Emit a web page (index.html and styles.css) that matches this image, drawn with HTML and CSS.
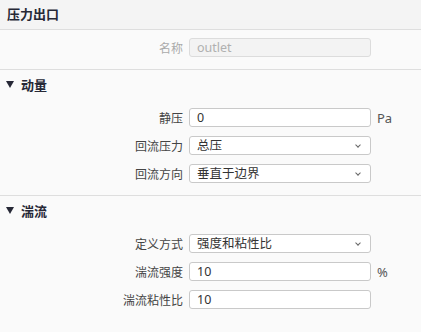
FILE: index.html
```html
<!DOCTYPE html>
<html lang="zh">
<head>
<meta charset="utf-8">
<link rel="stylesheet" href="styles.css">
</head>
<body>
<div class="panel">
  <div class="header">压力出口</div>
  <div class="block name-block">
    <div class="grid">
      <label class="lbl muted">名称</label>
      <div class="field disabled">outlet</div>
      <span></span>
    </div>
  </div>
  <div class="block">
    <div class="sec-title"><span class="tri"></span>动量</div>
    <div class="grid rows">
      <label class="lbl">静压</label>
      <div class="field">0</div>
      <span class="unit">Pa</span>

      <label class="lbl">回流压力</label>
      <div class="field select">总压<span class="chev"></span></div>
      <span></span>

      <label class="lbl">回流方向</label>
      <div class="field select">垂直于边界<span class="chev"></span></div>
      <span></span>
    </div>
  </div>
  <div class="block last">
    <div class="sec-title"><span class="tri"></span>湍流</div>
    <div class="grid rows">
      <label class="lbl">定义方式</label>
      <div class="field select">强度和粘性比<span class="chev"></span></div>
      <span></span>

      <label class="lbl">湍流强度</label>
      <div class="field">10</div>
      <span class="unit">%</span>

      <label class="lbl">湍流粘性比</label>
      <div class="field">10</div>
      <span></span>
    </div>
  </div>
</div>
</body>
</html>
```

FILE: styles.css
```css
html, body {
  margin: 0;
  padding: 0;
  background: #fafafa;
}
body {
  width: 421px;
  height: 332px;
  overflow: hidden;
  font-family: "Noto Sans", "Noto Sans CJK SC", sans-serif;
  color: #3a3a3a;
}
.header {
  height: 29px;
  line-height: 29px;
  padding-left: 7px;
  background: #f4f4f4;
  border-bottom: 1px solid #dedede;
  font-size: 13px;
  font-weight: 700;
  color: #262836;
}
.block {
  border-bottom: 1px solid #dedede;
}
.block.last {
  border-bottom: none;
}
.name-block {
  padding: 8px 0 12px;
}
.sec-title {
  height: 28px;
  display: flex;
  align-items: center;
  padding-left: 6px;
  font-size: 13px;
  font-weight: 700;
  color: #262836;
}
.tri {
  width: 0;
  height: 0;
  border-left: 4px solid transparent;
  border-right: 4px solid transparent;
  border-top: 7px solid #262836;
  margin-right: 7px;
}
.grid {
  display: grid;
  grid-template-columns: 183px 182px auto;
  column-gap: 6px;
  row-gap: 9px;
  align-items: center;
}
.rows {
  padding: 10px 0 12px;
}
.lbl {
  text-align: right;
  font-size: 12px;
  color: #444;
}
.lbl.muted {
  color: #aaa;
}
.field {
  box-sizing: border-box;
  height: 19px;
  border: 1px solid #c9c9c9;
  border-radius: 3px;
  background: #fff;
  padding-left: 7px;
  font-size: 12.5px;
  line-height: 17px;
  color: #333;
  position: relative;
}
.field.disabled {
  background: #f3f3f3;
  border-color: #dcdcdc;
  color: #b0b0b0;
}
.chev {
  position: absolute;
  right: 10px;
  top: 6px;
  width: 3px;
  height: 3px;
  border-right: 1px solid #666;
  border-bottom: 1px solid #666;
  transform: rotate(45deg);
}
.unit {
  font-size: 13px;
  color: #555;
}
```
